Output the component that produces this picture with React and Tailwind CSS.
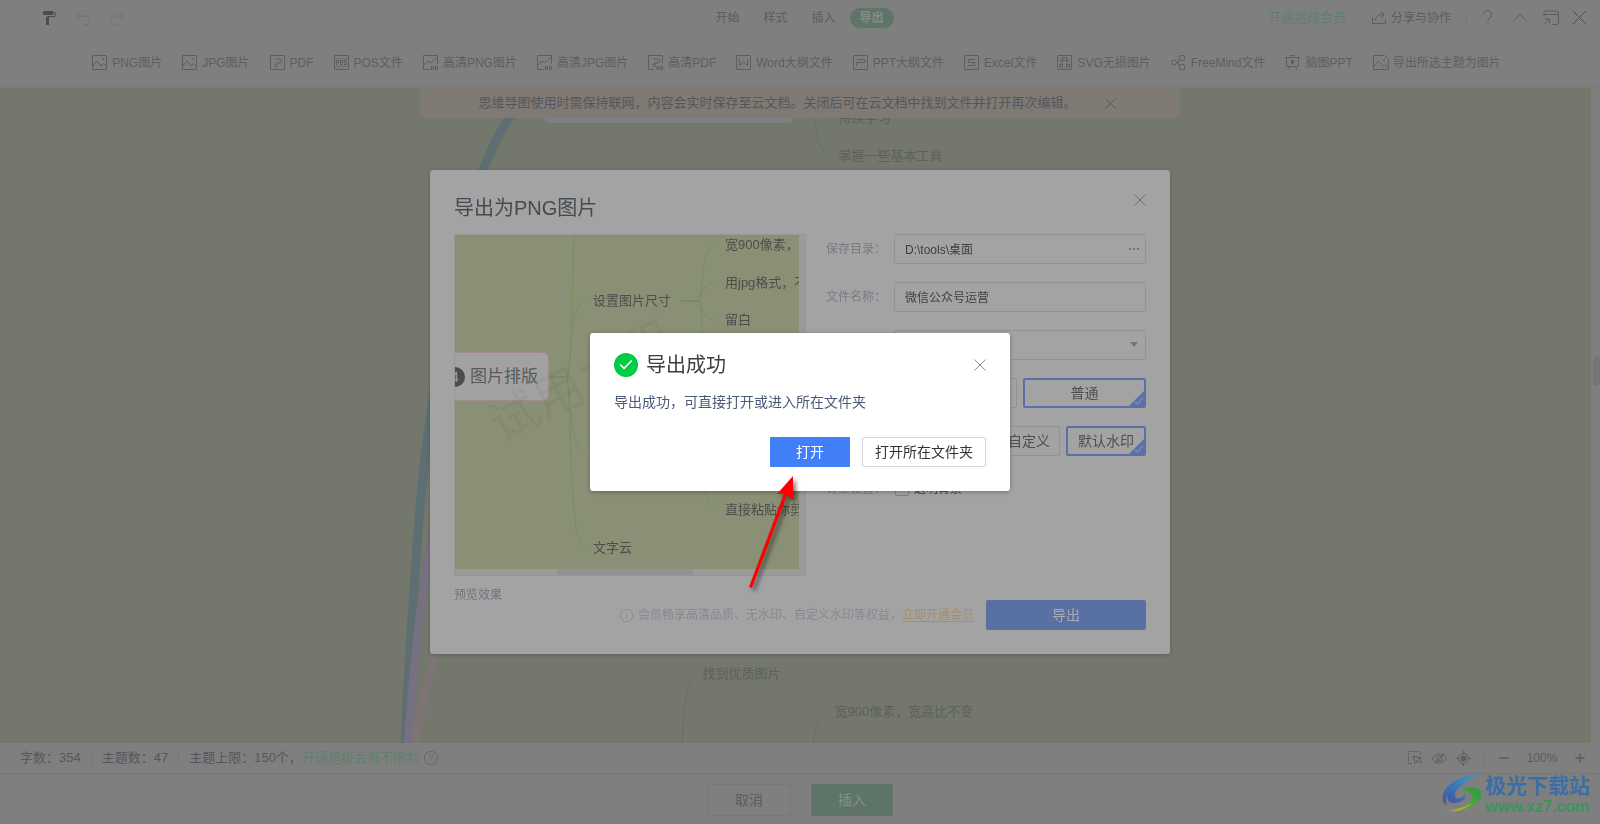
import { useState } from 'react';
import { CircleQuestionMark, Info, Minus, Plus, Check } from 'lucide-react';

const exportItems = [
  { icon: 'image', label: 'PNG图片' },
  { icon: 'image', label: 'JPG图片' },
  { icon: 'pdf', label: 'PDF' },
  { icon: 'pos', label: 'POS文件' },
  { icon: 'imageHd', label: '高清PNG图片' },
  { icon: 'imageHd', label: '高清JPG图片' },
  { icon: 'pdfHd', label: '高清PDF' },
  { icon: 'word', label: 'Word大纲文件' },
  { icon: 'ppt', label: 'PPT大纲文件' },
  { icon: 'excel', label: 'Excel文件' },
  { icon: 'svg', label: 'SVG无损图片' },
  { icon: 'freemind', label: 'FreeMind文件' },
  { icon: 'slides', label: '脑图PPT' },
  { icon: 'imageCut', label: '导出所选主题为图片' },
];

const frame = <rect x="0.5" y="0.5" width="14" height="14" rx="0.5" />;

const glyphs = {
  image: (
    <>
      {frame}
      <path d="M1 11l4-5 4 5 2.500-2.500L14 11" />
      <circle cx="11" cy="4" r="0.500" />
    </>
  ),
  imageHd: (
    <>
      <path d="M7 14.500H0.500V0.500h14V9" />
      <path d="M1 10l4-4 3 2 6-6" />
      <path d="M8.500 11v4M8.500 13h2M10.500 11v4M12.500 11v4h1l1-1v-2l-1-1z" />
    </>
  ),
  imageCut: (
    <>
      <path d="M0.500 0.500h11l4 4v10h-15z" />
      <path d="M1 11.500l4.500-5.500 4.500 5.500 2-2 3 2.500" />
      <circle cx="11" cy="5" r="0.500" />
    </>
  ),
  pdf: (
    <>
      {frame}
      <path d="M5 4h4.500a2 2 0 0 1 0 4H7.500v2.500a1.300 1.300 0 1 1-2.500 0c0-1 1-1.500 2.500-1.500" />
    </>
  ),
  pdfHd: (
    <>
      <path d="M6 14.500H0.500V0.500h14V8" />
      <path d="M5 4h4.500a2 2 0 0 1 0 4H7v3a1 1 0 0 1-2-1c0-1 1-2 2-2" />
      <path d="M9 11v4M9 13h2M11 11v4M13 11v4h1l1-1v-2l-1-1z" />
    </>
  ),
  pos: (
    <>
      {frame}
      <path d="M2.500 10V5.500H5v2H2.500M6.500 5.500h2v4h-2zM12.500 5.500H10v2h2.500v2H10" />
      <path d="M0.500 3.500h14M0.500 11.500h14" strokeWidth="0.500" />
    </>
  ),
  word: (
    <>
      {frame}
      <path d="M3.500 4v7L7.500 6.500l4 4.500V4" />
    </>
  ),
  ppt: (
    <>
      {frame}
      <path d="M3.500 4.500h8v3h-8v3.500" />
    </>
  ),
  excel: (
    <>
      {frame}
      <path d="M11 4.500H4.500v3H10.500v3H4" />
    </>
  ),
  svg: (
    <>
      {frame}
      <rect x="5.500" y="2.500" width="4" height="3" />
      <path d="M5.500 5.500L4 9.500M9.500 5.500l1.500 4M2 6l3-2M13 6l-3-2" />
      <rect x="2.500" y="9.500" width="3" height="2.500" />
      <rect x="9.500" y="9.500" width="3" height="2.500" />
    </>
  ),
  freemind: (
    <>
      <circle cx="3" cy="7.500" r="2.500" />
      <rect x="8.500" y="0.500" width="5" height="5" rx="1.500" />
      <rect x="8.500" y="9.500" width="5" height="5" rx="1.500" />
      <path d="M5.500 7.500H8M8.500 4L6.500 7.500l2 3.500" />
    </>
  ),
  slides: (
    <>
      <path d="M0 2.500h15M1.500 2.500v9h12v-9M5 0.500h5M3 14.500l2-3M12 14.500l-2-3" />
      <path d="M6.500 5v4l3-2z" fill="currentColor" />
    </>
  ),
};

function ToolIcon({ name }) {
  return (
    <svg width="15" height="15" viewBox="0 0 15 15" fill="none" stroke="currentColor" className="shrink-0 overflow-visible" aria-hidden="true">
      {glyphs[name]}
    </svg>
  );
}

function TopBar() {
  return (
    <header className="grid h-9 grid-cols-[1fr_auto_1fr] items-center pl-[42px] pr-[13px] text-xs text-[#5c5c5f]">
      <div className="flex items-center gap-[19px]">
        <button aria-label="格式刷" className="text-[#4c4c4c]">
          <svg width="15" height="16" viewBox="0 0 15 16" fill="none" stroke="currentColor">
            <path d="M1 1h10v4H1z" fill="currentColor" stroke="none" />
            <path d="M11 2.500h2v4H5.500V9" />
            <path d="M4 7h3v8H4z" fill="currentColor" stroke="none" />
          </svg>
        </button>
        <button aria-label="撤销" className="text-[#727272]">
          <svg width="15" height="15" viewBox="0 0 15 15" fill="none" stroke="currentColor">
            <path d="M5 0.500L0.500 5 5 9.500M0.500 5H9.500a4.500 4.500 0 0 1 0 9H8" />
          </svg>
        </button>
        <button aria-label="重做" className="text-[#727272]">
          <svg width="15" height="15" viewBox="0 0 15 15" fill="none" stroke="currentColor">
            <path d="M10 0.500L14.500 5 10 9.500M14.500 5H5.500a4.500 4.500 0 0 0 0 9H7" />
          </svg>
        </button>
      </div>
      <nav className="flex items-center pr-8">
        <button className="w-12">开始</button>
        <button className="w-12">样式</button>
        <button className="w-12">插入</button>
        <button className="ml-[2px] h-5 w-11 rounded-full bg-[#5f7568] font-bold text-[#868c89]">导出</button>
      </nav>
      <div className="flex items-center justify-end">
        <a href="#vip" className="mr-[26px] text-[13px] text-[#5f7f6e]">开通超级会员</a>
        <button className="flex items-center gap-1 border-r border-[#787878] pr-[15px]">
          <svg width="15" height="14" viewBox="0 0 15 14" fill="none" stroke="currentColor">
            <path d="M0.500 6.500v6h13v-4M3.500 9.500c0-4 3-6 8-6M9 0.500l3.500 3L9 6.500" />
          </svg>
          分享与协作
        </button>
        <button aria-label="帮助" className="ml-4">
          <svg width="10" height="15" viewBox="0 0 10 15" fill="none" stroke="currentColor">
            <path d="M0.500 4.500a4 4 0 1 1 7 2.500C6 8.500 5 9 5 11M5 12.500v1.500" />
          </svg>
        </button>
        <button aria-label="收起" className="ml-5">
          <svg width="14" height="9" viewBox="0 0 14 9" fill="none" stroke="currentColor">
            <path d="M0.500 8L7 1.500 13.500 8" />
          </svg>
        </button>
        <button aria-label="还原窗口" className="ml-4">
          <svg width="17" height="16" viewBox="0 0 17 16" fill="none" stroke="currentColor">
            <path d="M1 7V2.500A1.500 1.500 0 0 1 2.500 1H14a1.500 1.500 0 0 1 1.500 1.500V13a1.500 1.500 0 0 1-1.500 1.500H9M1 4.500h14.500M1 14.500L6.500 9M2 9h4.500v4.500" />
          </svg>
        </button>
        <button aria-label="关闭" className="ml-3 text-[#4f4f52]">
          <svg width="15" height="15" viewBox="0 0 15 15" fill="none" stroke="currentColor">
            <path d="M1 1l13 13M14 1L1 14" />
          </svg>
        </button>
      </div>
    </header>
  );
}

function Toolbar() {
  return (
    <div className="flex h-[51px] items-center justify-center gap-5 pr-[7px] pt-[2px] text-xs text-[#5d5e62]">
      {exportItems.map((item) => (
        <button key={item.label} className="flex shrink-0 items-center gap-[5px] whitespace-nowrap">
          <ToolIcon name={item.icon} />
          {item.label}
        </button>
      ))}
    </div>
  );
}

function Canvas({ showNotice, onCloseNotice }) {
  return (
    <main className="flex min-h-0 flex-1 border-t border-[#7a7a7a]">
      <div className="relative min-w-0 flex-1 overflow-hidden bg-[#74776b]">
        <div className="absolute inset-y-0 left-1/2 -ml-[795px] w-[1600px] text-[13px] leading-5 text-[#5e6159]">
          <svg width="1600" height="656" viewBox="0 0 1600 656" fill="none" className="absolute left-0 top-0">
            <path d="M518 15C500 40 489 64 481 84C455 160 440 250 432 312C422 370 418 430 415 472C411 530 406 600 404 660" stroke="#5d6f72" strokeWidth="9" />
            <path d="M440 400C425 470 413 560 407 656" stroke="#767080" strokeWidth="8" />
            <path d="M450 520C434 560 424 600 414 656" stroke="#7d7575" strokeWidth="8" />
            <path d="M813 0c0 42 4 64 16 68M821 30h8" stroke="#5f7478" />
            <path d="M681 656c2-44 6-66 14-69M812 656c2-18 6-30 15-32" stroke="#6b7260" />
          </svg>
          <div className="absolute -top-2 left-[542px] h-11 w-[251px] rounded-md border border-[#5f7c82] bg-[#7f7f7f]" />
          <span className="absolute left-[838px] top-5">持续学习</span>
          <span className="absolute left-[838px] top-[58px]">掌握一些基本工具</span>
          <span className="absolute left-[702px] top-[576px]">找到优质图片</span>
          <span className="absolute left-[834px] top-[614px]">宽900像素，宽高比不变</span>
        </div>
        {showNotice && (
          <div className="relative mx-auto w-[760px] translate-x-1 rounded-b bg-[#7f7a74] text-[13px] leading-[30px] text-[#56565b]">
            <p className="pl-[59px]">思维导图使用时需保持联网，内容会实时保存至云文档。关闭后可在云文档中找到文件并打开再次编辑。</p>
            <button onClick={onCloseNotice} aria-label="关闭提示" className="absolute right-16 top-[10px]">
              <svg width="11" height="11" viewBox="0 0 11 11" fill="none" stroke="currentColor">
                <path d="M0.500 0.500l10 10M10.500 0.500l-10 10" />
              </svg>
            </button>
          </div>
        )}
      </div>
      <div className="flex w-[9px] flex-col justify-center bg-[#7f7f7f] pb-[90px]">
        <div className="ml-[2px] h-[30px] rounded bg-[#757577]" />
      </div>
    </main>
  );
}

function StatusBar() {
  return (
    <div className="flex h-[31px] items-center justify-between border-b border-[#767676] pl-5 pr-[13px] text-[13px] text-[#57575a]">
      <div className="flex items-center">
        <span className="border-r border-[#787878] pr-[10px] leading-4">字数：354</span>
        <span className="border-r border-[#787878] px-[10px] leading-4">主题数：47</span>
        <span className="pl-[10px]">主题上限：150个，</span>
        <a href="#vip" className="text-[#5f7f6e]">开通超级会员不限制</a>
        <CircleQuestionMark size={16} strokeWidth={1.5} className="ml-1 text-[#68686a]" />
      </div>
      <div className="flex items-center text-[#5c5c5f]">
        <button aria-label="框选">
          <svg width="14" height="14" viewBox="0 0 14 14" fill="none" stroke="currentColor">
            <path d="M4 12.500H0.500V0.500h12V4" strokeDasharray="2 1" />
            <path d="M5 5l2.500 7.500 1.500-3 3 3 1.500-1.500-3-3 3-1z" />
          </svg>
        </button>
        <button aria-label="隐藏" className="ml-[10px]">
          <svg width="15" height="13" viewBox="0 0 15 13" fill="none" stroke="currentColor">
            <path d="M0.500 6.500C4 0.500 11 0.500 14.500 6.500C11 12.500 4 12.500 0.500 6.500zM3 11.500L12 1.500" />
            <circle cx="7.500" cy="6.500" r="2.500" />
          </svg>
        </button>
        <button aria-label="定位" className="ml-[9px]">
          <svg width="15" height="15" viewBox="0 0 15 15" fill="none" stroke="currentColor">
            <circle cx="7.500" cy="7.500" r="5" />
            <circle cx="7.500" cy="7.500" r="2.500" fill="currentColor" />
            <path d="M7.500 0v3M7.500 12v3M0 7.500h3M12 7.500h3" />
          </svg>
        </button>
        <span className="ml-[13px] h-4 w-px bg-[#787878]" />
        <button aria-label="缩小" className="ml-3">
          <Minus size={14} strokeWidth={2.5} />
        </button>
        <span className="ml-[15px] w-8 text-center text-xs">100%</span>
        <button aria-label="放大" className="ml-[15px]">
          <Plus size={14} strokeWidth={2.5} />
        </button>
      </div>
    </div>
  );
}

function Footer() {
  return (
    <footer className="relative flex h-[50px] items-center justify-center gap-5 pt-px text-sm">
      <button className="h-8 w-[84px] rounded-xs border border-[#787878] text-[#5c5c5f]">取消</button>
      <button className="h-8 w-[82px] rounded-xs bg-[#5f7468] text-[#82908a]">插入</button>
      <div className="absolute right-[10px] top-0 flex items-start gap-px">
        <svg width="43" height="41" viewBox="0 0 43 42">
          <defs>
            <linearGradient id="swirlBlue" x1="1" y1="0" x2="0" y2="1">
              <stop offset="0" stopColor="#3a9bc8" />
              <stop offset="0.6" stopColor="#3b73b4" />
              <stop offset="1" stopColor="#4a4f9e" />
            </linearGradient>
            <linearGradient id="swirlGreen" x1="1" y1="0" x2="0" y2="1">
              <stop offset="0" stopColor="#259a4b" />
              <stop offset="0.6" stopColor="#5fa23c" />
              <stop offset="1" stopColor="#c2b02c" />
            </linearGradient>
          </defs>
          <path d="M41 0C22 1 6 8 2 20c-2 6 0 10 3 12C3 20 12 8 41 0z" fill="url(#swirlBlue)" />
          <path d="M37 3C18 7 6 15 6 24c0 7 11 7 16 3c3-2 3-5 1-6c-1 4-8 6-9 2C12 17 22 9 37 3z" fill="url(#swirlBlue)" />
          <path d="M19 17c7-5 18-5 21 1c5 9-10 20-32 21c13-3 25-10 23-17c-1-4-7-5-12-5z" fill="url(#swirlGreen)" />
          <path d="M4 37c11 0 22-3 28-8c-5 6-14 9-28 8z" fill="#b9b52e" />
        </svg>
        <div className="-mt-px">
          <p className="text-[21px] font-bold leading-[26px] text-[#3a6fa5]">极光下载站</p>
          <p className="text-base font-bold leading-4 text-[#3b955a]">www.xz7.com</p>
        </div>
      </div>
    </footer>
  );
}

function Preview() {
  return (
    <div className="h-[342px] rounded-xs border border-[#979797] bg-[#9b9b9b]">
      <div className="relative h-[334px] w-[344px] overflow-hidden bg-[#8a9075] text-[13px] leading-5 text-[#4c4e49]">
        <svg width="344" height="334" viewBox="0 0 344 334" fill="none" stroke="#748f5c" className="absolute left-0 top-0">
          <path d="M94 142h18" strokeWidth="2" />
          <path d="M119 0C117 60 117 130 112 142C117 126 113 72 130 66M112 142C117 160 113 212 130 218M112 142C118 190 113 308 130 313" />
          <path d="M226 66h18" strokeWidth="2" />
          <path d="M244 66C248 54 246 14 261 9M244 66C246 60 248 47 261 47M244 66C246 72 248 85 261 85M244 66C248 80 247 100 248 170C249 230 246 272 262 275" />
        </svg>
        <div className="absolute -left-4 top-[117px] flex h-[49px] w-[110px] items-center rounded-md border border-[#a08c8c] bg-[#a2a2a2] text-[17px] text-[#5a5a5a]">
          <span className="mx-[5px] h-5 w-5 rounded-full bg-[#4c4c4c] text-center text-sm leading-5 text-[#a2a2a2]">4</span>
          图片排版
        </div>
        <span className="absolute left-[138px] top-14">设置图片尺寸</span>
        <span className="absolute left-[270px] top-0 whitespace-nowrap">宽900像素，宽高比不变</span>
        <span className="absolute left-[270px] top-[38px] whitespace-nowrap">用jpg格式，不要用png</span>
        <span className="absolute left-[270px] top-[75px]">留白</span>
        <span className="absolute left-[270px] top-[265px] whitespace-nowrap">直接粘贴你剪切的图片</span>
        <span className="absolute left-[138px] top-[303px]">文字云</span>
        <span className="absolute left-[26px] top-[115px] -rotate-[28deg] whitespace-nowrap text-[50px] leading-[64px] text-black/4">试用水印</span>
      </div>
    </div>
  );
}

function Row({ label, htmlFor, children }) {
  return (
    <div className="flex h-[30px] items-center">
      <label htmlFor={htmlFor} className="w-[68px] shrink-0 text-[#777b85]">{label}</label>
      {children}
    </div>
  );
}

function Choice({ active, children, className = '' }) {
  return (
    <button
      aria-pressed={!!active}
      className={`relative h-[30px] min-w-0 overflow-hidden whitespace-nowrap rounded-xs text-sm text-[#4e4e4e] ${active ? 'border-2 border-[#5970a8]' : 'border border-[#929292]'} ${className}`}
    >
      {children}
      {active && (
        <svg width="15" height="15" viewBox="0 0 16 16" className="absolute bottom-0 right-0" fill="none">
          <path d="M16 0v16H0z" fill="#5970a8" />
          <path d="M6 11l3 3 6-7" stroke="#a3a3a3" />
        </svg>
      )}
    </button>
  );
}

function ExportPanel() {
  const [folder, setFolder] = useState('D:\\tools\\桌面');
  const [fileName, setFileName] = useState('微信公众号运营');
  const field = 'h-[30px] w-full rounded-xs border border-[#929292] bg-transparent px-[10px] pb-[2px] text-xs text-[#3f3f3f] outline-none';

  return (
    <section className="w-[740px] rounded-[3px] bg-[#a3a3a3] p-6 text-xs shadow-[0_1px_4px_rgba(0,0,0,0.2)]">
      <div className="flex h-10 items-start justify-between">
        <h2 className="text-xl leading-7 text-[#454a52]">导出为PNG图片</h2>
        <button aria-label="关闭" className="text-[#6f6f6f]">
          <svg width="12" height="12" viewBox="0 0 12 12" fill="none" stroke="currentColor">
            <path d="M0.500 0.500l11 11M11.500 0.500l-11 11" />
          </svg>
        </button>
      </div>
      <div className="flex gap-5">
        <div className="w-[352px]">
          <Preview />
          <div className="-mt-[7px] flex h-[7px] justify-center pr-[10px]">
            <div className="relative h-[6px] w-[136px] rounded-full bg-[#929295]" />
          </div>
          <p className="mt-[11px] leading-4 text-[#6f7480]">预览效果</p>
        </div>
        <div className="flex flex-1 flex-col gap-[18px]">
          <Row label="保存目录：" htmlFor="folder">
            <div className="relative flex-1">
              <input id="folder" value={folder} onChange={(e) => setFolder(e.target.value)} className={field} />
              <button aria-label="浏览" className="absolute right-[7px] top-[14px] flex gap-[2px]">
                <i className="h-[2px] w-[2px] bg-[#6f7480]" />
                <i className="h-[2px] w-[2px] bg-[#6f7480]" />
                <i className="h-[2px] w-[2px] bg-[#6f7480]" />
              </button>
            </div>
          </Row>
          <Row label="文件名称：" htmlFor="fileName">
            <input id="fileName" value={fileName} onChange={(e) => setFileName(e.target.value)} className={field} />
          </Row>
          <Row label="导出格式：" htmlFor="format">
            <div className="relative flex-1">
              <select id="format" className={`${field} appearance-none`}>
                <option>PNG</option>
              </select>
              <svg width="8" height="5" viewBox="0 0 8 5" className="pointer-events-none absolute right-2 top-3" fill="#6f7480">
                <path d="M0 0h8L4 5z" />
              </svg>
            </div>
          </Row>
          <Row label="导出品质：">
            <div className="grid flex-1 grid-cols-2 gap-[6px]">
              <Choice>高清</Choice>
              <Choice active>普通</Choice>
            </div>
          </Row>
          <Row label="水印设置：">
            <div className="grid flex-1 grid-cols-3 gap-[6px]">
              <Choice>无水印</Choice>
              <Choice className="pr-[9px] text-right">自定义</Choice>
              <Choice active>默认水印</Choice>
            </div>
          </Row>
          <Row label="背景设置：">
            <input id="transparent" type="checkbox" className="ml-px h-[14px] w-[14px] appearance-none rounded-[1px] border border-[#808080]" />
            <label htmlFor="transparent" className="pl-[5px] text-[#3f3f3f]">透明背景</label>
          </Row>
        </div>
      </div>
      <div className="-mt-[3px] flex items-center justify-end">
        <Info size={15} strokeWidth={1.5} className="mr-1 text-[#868a94]" />
        <span className="text-[#868a94]">会员畅享高清品质、无水印、自定义水印等权益，</span>
        <a href="#vip" className="text-[#a98d68] underline underline-offset-2">立即开通会员</a>
        <button className="ml-3 h-[30px] w-40 rounded-xs bg-[#5970a3] text-sm text-[#a9abb0]">导出</button>
      </div>
    </section>
  );
}

function SuccessDialog({ onClose }) {
  return (
    <section role="dialog" aria-label="导出成功" className="relative h-[158px] w-[420px] rounded-[3px] bg-white px-6 pt-5 shadow-[0_1px_4px_rgba(0,0,0,0.3)]">
      <div className="flex items-center">
        <span className="flex h-6 w-6 items-center justify-center rounded-full bg-[#00cc44] text-white">
          <Check size={16} strokeWidth={2.5} />
        </span>
        <h3 className="flex-1 pl-2 text-xl leading-6 text-[#3d3d3d]">导出成功</h3>
        <button onClick={onClose} aria-label="关闭" className="text-[#8c8c8c]">
          <svg width="12" height="12" viewBox="0 0 12 12" fill="none" stroke="currentColor">
            <path d="M0.500 0.500l11 11M11.500 0.500l-11 11" />
          </svg>
        </button>
      </div>
      <p className="mt-[15px] text-sm leading-5 text-[#4b5878]">导出成功，可直接打开或进入所在文件夹</p>
      <div className="mt-[25px] flex justify-end gap-3 text-sm">
        <button className="h-[30px] w-20 rounded-[1px] bg-[#417ff9] text-white">打开</button>
        <button className="h-[30px] w-[124px] rounded-xs border border-[#d5d5dd] text-[#333]">打开所在文件夹</button>
      </div>
      {/* red pointer towards the open button */}
      <svg width="60" height="126" viewBox="0 0 60 126" className="pointer-events-none absolute left-[154px] top-[138px] drop-shadow-[3px_3px_2px_rgba(0,0,0,0.5)]">
        <path d="M49 5L49 29L43 24L8 117L5 116L40 22.500L33 23z" fill="#ff0000" />
      </svg>
    </section>
  );
}

export default function App() {
  const [showNotice, setShowNotice] = useState(true);
  const [showSuccess, setShowSuccess] = useState(true);

  return (
    <div className="flex h-screen flex-col overflow-hidden bg-[#7f7f7f] font-['Liberation_Sans','Noto_Sans_CJK_SC',sans-serif]">
      <TopBar />
      <Toolbar />
      <Canvas showNotice={showNotice} onCloseNotice={() => setShowNotice(false)} />
      <StatusBar />
      <Footer />

      <div className="fixed inset-0 flex items-center justify-center">
        <ExportPanel />
      </div>
      {showSuccess && (
        <div className="fixed inset-0 flex items-center justify-center">
          <SuccessDialog onClose={() => setShowSuccess(false)} />
        </div>
      )}
    </div>
  );
}
